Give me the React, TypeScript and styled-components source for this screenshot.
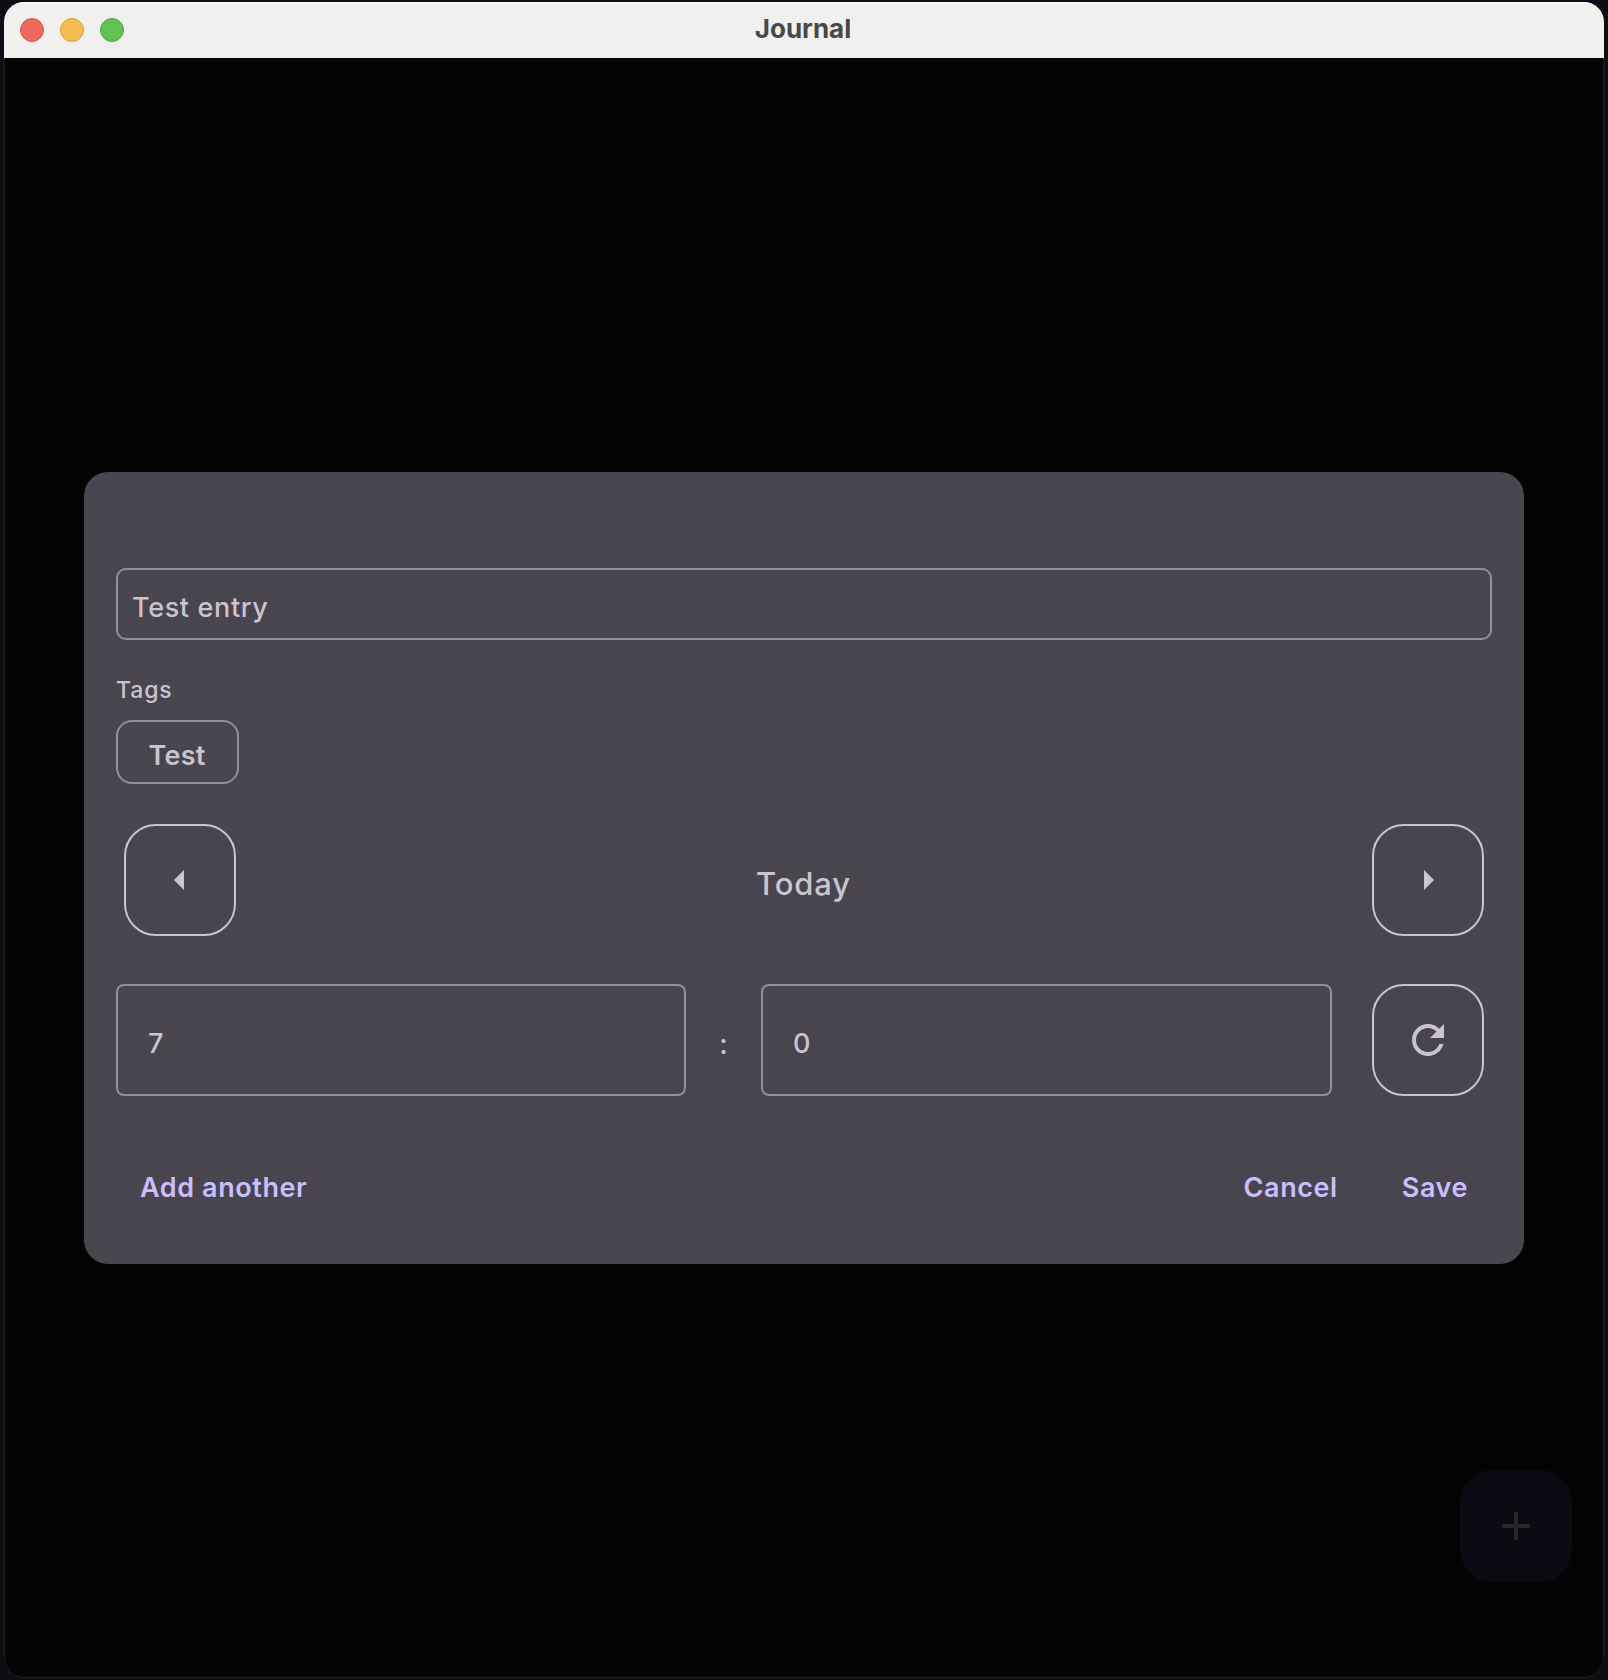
import React from "react";
import styled, { createGlobalStyle } from "styled-components";

const outline = "#938f99";
const onSurface = "#cac4d0";
const primary = "#cabeff";

const Global = createGlobalStyle`
  *, *::before, *::after { box-sizing: border-box; }
  body { margin: 0; background: #0b0c13; font-family: Inter, "Liberation Sans", sans-serif; }
  button, input { font-family: inherit; margin: 0; padding: 0; background: none; color: inherit; outline: none; }
`;
const Desktop = styled.div`
  height: 1680px;
  padding: 2px 4px;
  background: #0c0d15;
  overflow: hidden;
`;
const Window = styled.div`
  position: relative;
  display: flex;
  flex-direction: column;
  height: 1676px;
  border-radius: 20px;
  overflow: hidden;
  background: #030303;
`;
const TitleBar = styled.header`
  display: flex;
  align-items: center;
  flex: none;
  height: 56px;
  padding: 0 16px;
  background: #f1f0ee;
  box-shadow: inset 0 2px 0 #fbf9f5;
`;
const Lights = styled.div`
  display: flex;
  gap: 16px;
  flex: 1;
`;
const Light = styled.span<{ $fill: string; $rim: string }>`
  width: 24px;
  height: 24px;
  border-radius: 50%;
  background: ${p => p.$fill};
  border: 1px solid ${p => p.$rim};
`;
const Title = styled.h1`
  margin: 0;
  padding: 0 2px 2px 0;
  font-size: 26px;
  line-height: 32px;
  font-weight: 700;
  color: #484846;
`;
const Spacer = styled.div`
  flex: 1;
`;
const Content = styled.main`
  display: flex;
  align-items: flex-start;
  flex: 1;
  padding: 414px 79px 0;
  border: 1px solid #202020;
  border-top: 0;
  border-radius: 0 0 20px 20px;
`;
const Dialog = styled.section`
  display: flex;
  flex-direction: column;
  flex: none;
  width: 1440px;
  height: 792px;
  padding: 96px 32px 0;
  border-radius: 24px;
  background: #48454f;
  color: ${onSurface};
`;
const EntryInput = styled.input`
  flex: none;
  height: 72px;
  padding: 6px 14px 0;
  border: 2px solid ${outline};
  border-radius: 10px;
  font-size: 27px;
  font-weight: 450;
  letter-spacing: 0.65px;
`;
const Label = styled.div`
  margin-top: 34px;
  height: 32px;
  font-size: 23px;
  line-height: 32px;
  font-weight: 450;
  letter-spacing: 0.9px;
`;
const Chip = styled.button`
  align-self: flex-start;
  width: 123px;
  height: 64px;
  margin-top: 14px;
  padding: 6px 1px 0 0;
  border: 2px solid ${outline};
  border-radius: 16px;
  font-size: 27px;
  font-weight: 600;
  letter-spacing: 0.3px;
`;
const DateRow = styled.div`
  display: flex;
  align-items: center;
  justify-content: space-between;
  height: 112px;
  margin-top: 40px;
  padding: 0 8px;
`;
const DateText = styled.div`
  padding: 8px 1px 0 0;
  font-size: 31px;
  line-height: 40px;
  font-weight: 450;
  letter-spacing: 0.9px;
`;
const IconButton = styled.button`
  display: flex;
  align-items: center;
  justify-content: center;
  flex: none;
  width: 112px;
  height: 112px;
  border: 2px solid ${onSurface};
  border-radius: 32px;
`;
const Icon = styled.svg`
  width: 48px;
  height: 48px;
  fill: currentColor;
`;
const TimeRow = styled.div`
  display: flex;
  align-items: center;
  height: 112px;
  margin-top: 48px;
  padding-right: 8px;
`;
const TimeInput = styled.input<{ $width: number }>`
  width: ${p => p.$width}px;
  height: 112px;
  padding: 6px 30px 0;
  border: 2px solid ${outline};
  border-radius: 8px;
  font-size: 27px;
  font-weight: 450;
`;
const Colon = styled.div`
  width: 75px;
  padding-top: 8px;
  text-align: center;
  font-size: 28px;
  font-weight: 500;
`;
const Actions = styled.footer`
  display: flex;
  margin-top: 72px;
  padding: 0 24px;
`;
const TextButton = styled.button<{ $gap?: number }>`
  margin-left: ${p => p.$gap ?? 0}px;
  border: 0;
  color: ${primary};
  font-size: 27px;
  line-height: 40px;
  font-weight: 600;
  letter-spacing: 0.58px;
`;
const Fab = styled.button`
  position: absolute;
  right: 32px;
  bottom: 96px;
  display: flex;
  align-items: center;
  justify-content: center;
  width: 112px;
  height: 112px;
  border: 0;
  border-radius: 32px;
  background: #0b0912;
  color: #272529;
`;

export default function App() {
  return (
    <>
      <Global />
      <Desktop>
        <Window>
          <TitleBar>
            <Lights>
              <Light $fill="#ee6a5f" $rim="#d8594f" />
              <Light $fill="#f5bd4f" $rim="#d9a03c" />
              <Light $fill="#61c354" $rim="#4dab3f" />
            </Lights>
            <Title>Journal</Title>
            <Spacer />
          </TitleBar>
          <Content>
            <Dialog>
              <EntryInput defaultValue="Test entry" />
              <Label>Tags</Label>
              <Chip>Test</Chip>
              <DateRow>
                <IconButton><Icon viewBox="0 0 24 24"><path d="M14 7l-5 5 5 5V7z" /></Icon></IconButton>
                <DateText>Today</DateText>
                <IconButton><Icon viewBox="0 0 24 24"><path d="M10 17l5-5-5-5v10z" /></Icon></IconButton>
              </DateRow>
              <TimeRow>
                <TimeInput $width={570} defaultValue="7" />
                <Colon>:</Colon>
                <TimeInput $width={571} defaultValue="0" />
                <Spacer />
                <IconButton>
                  <Icon viewBox="0 0 24 24">
                    <path d="M17.65 6.35C16.2 4.9 14.21 4 12 4c-4.42 0-7.99 3.58-7.99 8s3.57 8 7.99 8c3.73 0 6.84-2.55 7.73-6h-2.08c-.82 2.33-3.04 4-5.65 4-3.31 0-6-2.69-6-6s2.69-6 6-6c1.66 0 3.14.69 4.22 1.78L13 11h7V4l-2.35 2.35z" />
                  </Icon>
                </IconButton>
              </TimeRow>
              <Actions>
                <TextButton>Add another</TextButton>
                <Spacer />
                <TextButton>Cancel</TextButton>
                <TextButton $gap={64}>Save</TextButton>
              </Actions>
            </Dialog>
          </Content>
          <Fab>
            <Icon viewBox="0 0 24 24"><path d="M19 13h-6v6h-2v-6H5v-2h6V5h2v6h6v2z" /></Icon>
          </Fab>
        </Window>
      </Desktop>
    </>
  );
}
